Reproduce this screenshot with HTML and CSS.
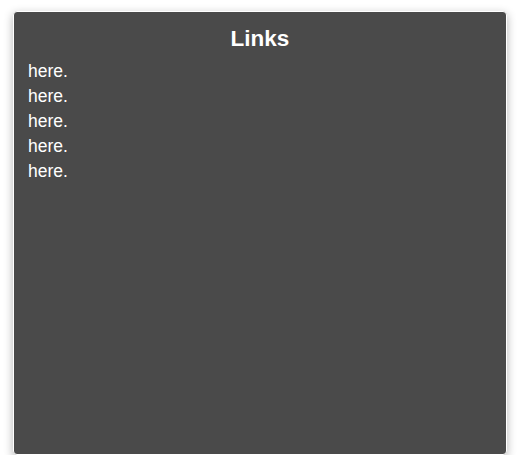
FILE: index.html
```html
<!DOCTYPE html>
<html>
<head>
<meta charset="utf-8">
<link rel="stylesheet" href="styles.css">
</head>
<body>
<div class="panel">
  <h1 class="title">Links</h1>
  <ul class="links">
    <li>here.</li>
    <li>here.</li>
    <li>here.</li>
    <li>here.</li>
    <li>here.</li>
  </ul>
</div>
</body>
</html>
```
FILE: styles.css
```css
html, body {
  margin: 0;
  padding: 0;
  background: #ffffff;
}
body {
  padding: 11px 0 0 13px;
  font-family: "Liberation Sans", Arial, sans-serif;
}
.panel {
  box-sizing: border-box;
  width: 494px;
  height: 444px;
  background: #4a4a4a;
  border: 1px solid #ffffff;
  border-radius: 4px;
  box-shadow: 0 3px 10px rgba(0, 0, 0, 0.3);
  padding: 12px 14px;
  color: #ffffff;
}
.title {
  margin: 0;
  font-size: 22.5px;
  font-weight: bold;
  text-align: center;
  line-height: 30px;
}
.links {
  list-style: none;
  margin: 5px 0 0;
  padding: 0;
  font-size: 17.5px;
  line-height: 25px;
}
```
